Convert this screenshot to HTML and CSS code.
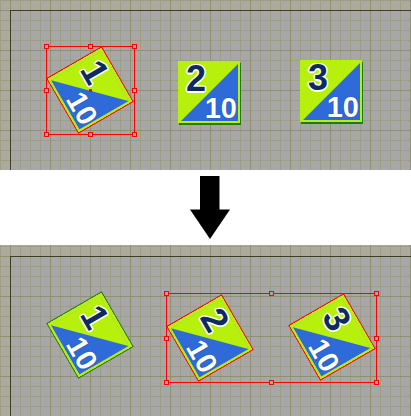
FILE: index.html
```html
<!DOCTYPE html>
<html>
<head>
<meta charset="utf-8">
<title>Rotate pieces</title>
<link rel="stylesheet" href="styles.css">
</head>
<body>
<div class="canvas">
  <div class="page"></div>
  <div class="piece rot selected a1"><span class="num">1</span><span class="val">10</span></div>
  <div class="piece a2"><span class="num">2</span><span class="val">10</span></div>
  <div class="piece a3"><span class="num">3</span><span class="val">10</span></div>
  <div class="sel sel-a">
    <span class="h tl"></span><span class="h tc"></span><span class="h tr"></span>
    <span class="h ml"></span><span class="h mr"></span>
    <span class="h bl"></span><span class="h bc"></span><span class="h br"></span>
    <span class="pivot"></span>
  </div>
</div>
<div class="arrow-row">
  <svg class="arrow" width="40" height="64" viewBox="0 0 40 64">
    <rect x="10" y="0" width="19.5" height="34" fill="#000"/>
    <polygon points="0,33.5 40,33.5 20,63" fill="#000"/>
  </svg>
</div>
<div class="canvas canvas--after">
  <div class="page"></div>
  <div class="piece rot b1"><span class="num">1</span><span class="val">10</span></div>
  <div class="piece rot selected b2"><span class="num">2</span><span class="val">10</span></div>
  <div class="piece rot selected b3"><span class="num">3</span><span class="val">10</span></div>
  <div class="sel sel-b">
    <span class="h tl"></span><span class="h tc"></span><span class="h tr"></span>
    <span class="h ml"></span><span class="h mr"></span>
    <span class="h bl"></span><span class="h bc"></span><span class="h br"></span>
  </div>
</div>
</body>
</html>
```
FILE: styles.css
```css
* { box-sizing: border-box; }
html, body { margin: 0; background: #fff; }
body {
  width: 411px;
  height: 416px;
  overflow: hidden;
  font-family: "Liberation Sans", Arial, sans-serif;
}

.canvas {
  --oy: 0px;
  position: relative;
  height: 170px;
  overflow: hidden;
  padding: calc(10px + var(--oy)) 0 0 10px;
  background:
    linear-gradient(to right, #909070 1px, transparent 1px) 10px 0 / 40px 100%,
    linear-gradient(to bottom, #909070 1px, transparent 1px) 0 calc(10px + var(--oy)) / 100% 40px,
    linear-gradient(to right, #9e9e87 1px, transparent 1px) 0 0 / 10px 100%,
    linear-gradient(to bottom, #9e9e87 1px, transparent 1px) 0 var(--oy) / 100% 10px,
    #aca99d;
}
.canvas--after { --oy: 1px; height: 171px; }

.page {
  height: 100%;
  border-left: 1px solid #3e3e20;
  border-top: 1px solid #3e3e20;
  background:
    linear-gradient(to right, #909070 1px, transparent 1px) 39px 0 / 40px 100%,
    linear-gradient(to bottom, #909070 1px, transparent 1px) 0 39px / 100% 40px,
    linear-gradient(to right, #9e9e87 1px, transparent 1px) 9px 0 / 10px 100%,
    linear-gradient(to bottom, #9e9e87 1px, transparent 1px) 0 9px / 100% 10px,
    #a7a7a7;
}

.piece {
  position: absolute;
  width: 62px;
  height: 62px;
  display: flex;
  flex-direction: column;
  justify-content: space-between;
  border-style: solid;
  border-color: #b6f00c;
  border-width: 3px 2px 2px 3px;
  padding: 0 1px 0 5px;
  background: linear-gradient(to bottom right, #b6f00c calc(50% - 0.5px), #2e6bd9 calc(50% + 0.5px));
  box-shadow: 1px 2px 0 #1f7a14;
}
.piece.rot { transform: rotate(60deg); box-shadow: 0 0 0 1px #1f7a14; }
.piece.rot.selected { box-shadow: 0 0 0 1px #ff0000; }

.num {
  align-self: flex-start;
  font-weight: 700;
  font-size: 36px;
  line-height: 30px;
  color: #0d2b5e;
  text-shadow:
    -1.5px 0 0 #fff, 1.5px 0 0 #fff, 0 -1.5px 0 #fff, 0 1.5px 0 #fff,
    -1px -1px 0 #fff, 1px -1px 0 #fff, -1px 1px 0 #fff, 1px 1px 0 #fff;
}
.val {
  align-self: flex-end;
  font-weight: 700;
  font-size: 29px;
  line-height: 25px;
  color: #fff;
  text-shadow: 0 0 1px #0b2d6e;
}

.a1 { left: 59px; top: 59px; }
.a2 { left: 178px; top: 61px; }
.a3 { left: 300px; top: 60px; }
.b1 { left: 59px; top: 59px; }
.b2 { left: 179px; top: 62px; }
.b3 { left: 301px; top: 61px; }

.sel {
  position: absolute;
  border: 1px solid #ff0000;
}
.sel-a { left: 46px; top: 46px; width: 89px; height: 89px; }
.sel-b { left: 166px; top: 48px; width: 211px; height: 90px; }

.h {
  position: absolute;
  width: 5px;
  height: 5px;
  border: 1px solid #ff0000;
  background: #a7a7a7;
}
.tl { left: -3px; top: -3px; }
.tc { left: calc(50% - 2.5px); top: -3px; }
.tr { right: -3px; top: -3px; }
.ml { left: -3px; top: calc(50% - 2.5px); }
.mr { right: -3px; top: calc(50% - 2.5px); }
.bl { left: -3px; bottom: -3px; }
.bc { left: calc(50% - 2.5px); bottom: -3px; }
.br { right: -3px; bottom: -3px; }

.pivot {
  position: absolute;
  left: calc(50% - 1.5px);
  top: calc(50% - 1.5px);
  width: 3px;
  height: 3px;
  background: #ff0000;
}

.arrow-row {
  height: 75px;
  padding: 6px 0 0 190px;
}
.arrow { display: block; }
```
